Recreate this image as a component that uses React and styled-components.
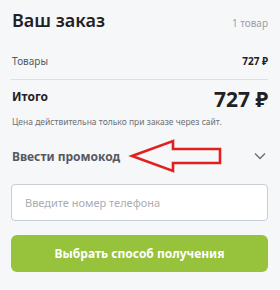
import styled, { createGlobalStyle } from "styled-components";

const Global = createGlobalStyle`
  html, body {
    margin: 0;
    padding: 0;
    background: #f6f7f9;
  }
  body {
    font-family: "Noto Sans", "Open Sans", sans-serif;
  }
`;

const Card = styled.div`
  width: 280px;
  height: 290px;
  box-sizing: border-box;
  padding: 8px 12px 0 11px;
  display: flex;
  flex-direction: column;
`;

const Header = styled.div`
  display: flex;
  justify-content: space-between;
  align-items: baseline;
  padding-left: 1px;
`;

const Title = styled.h1`
  margin: 0;
  font-size: 18px;
  font-weight: 600;
  color: #1f2124;
  line-height: 24px;
`;

const Muted = styled.span`
  font-size: 10px;
  color: #9a9ea6;
`;

const Row = styled.div`
  display: flex;
  justify-content: space-between;
  align-items: ${(p) => p.$align || "center"};
  margin-top: ${(p) => p.$gap || 0}px;
  padding-left: 1px;
`;

const Label = styled.span`
  font-size: 10px;
  color: #55595f;
`;

const Price = styled.span`
  font-size: 10px;
  font-weight: 700;
  color: #1f2124;
`;

const Divider = styled.hr`
  border: none;
  border-top: 1px solid #dcdfe4;
  margin: 11px 0 0;
`;

const TotalLabel = styled.span`
  font-size: 12px;
  font-weight: 700;
  color: #1f2124;
  line-height: 16px;
  margin-top: 2px;
`;

const TotalPrice = styled.span`
  font-size: 21px;
  font-weight: 700;
  color: #1f2124;
  line-height: 24px;
`;

const Note = styled.p`
  margin: 5px 0 0 1px;
  font-size: 8.5px;
  color: #6d7178;
`;

const Promo = styled.div`
  position: relative;
  display: flex;
  justify-content: space-between;
  align-items: center;
  height: 30px;
  margin-top: 14px;
  padding-left: 1px;
`;

const PromoText = styled.span`
  font-size: 12px;
  font-weight: 700;
  color: #55595f;
`;

const Arrow = styled.svg`
  position: absolute;
  left: 107px;
  top: -3px;
`;

const Chevron = styled.svg`
  margin-right: 2px;
`;

const Input = styled.input`
  margin-top: 13px;
  height: 37px;
  box-sizing: border-box;
  width: 100%;
  border: 1px solid #c9cdd4;
  border-radius: 4px;
  background: #fff;
  padding: 0 13px;
  font-family: inherit;
  font-size: 11px;
  outline: none;
  &::placeholder {
    color: #a9adb4;
  }
`;

const Button = styled.button`
  margin-top: 14px;
  height: 37px;
  width: 100%;
  border: none;
  border-radius: 6px;
  background: #97c23b;
  color: #fff;
  font-family: inherit;
  font-size: 12px;
  font-weight: 700;
  cursor: pointer;
`;

export default function App() {
  return (
    <>
      <Global />
      <Card>
        <Header>
          <Title>Ваш заказ</Title>
          <Muted>1 товар</Muted>
        </Header>
        <Row $gap={22}>
          <Label>Товары</Label>
          <Price>727 ₽</Price>
        </Row>
        <Divider />
        <Row $align="flex-start" $gap={7}>
          <TotalLabel>Итого</TotalLabel>
          <TotalPrice>727 ₽</TotalPrice>
        </Row>
        <Note>Цена действительна только при заказе через сайт.</Note>
        <Promo>
          <PromoText>Ввести промокод</PromoText>
          <Arrow width="106" height="36" viewBox="0 0 106 36">
            <path
              d="M14 18 L55 3 L55 11 L102 11 L102 25 L55 25 L55 33 Z"
              fill="none"
              stroke="#e0211f"
              strokeWidth="2.6"
              strokeLinejoin="miter"
            />
          </Arrow>
          <Chevron width="12" height="8" viewBox="0 0 12 8">
            <path d="M1 1.5 L6 6.5 L11 1.5" fill="none" stroke="#6a6e75" strokeWidth="1.4" />
          </Chevron>
        </Promo>
        <Input placeholder="Введите номер телефона" />
        <Button>Выбрать способ получения</Button>
      </Card>
    </>
  );
}
